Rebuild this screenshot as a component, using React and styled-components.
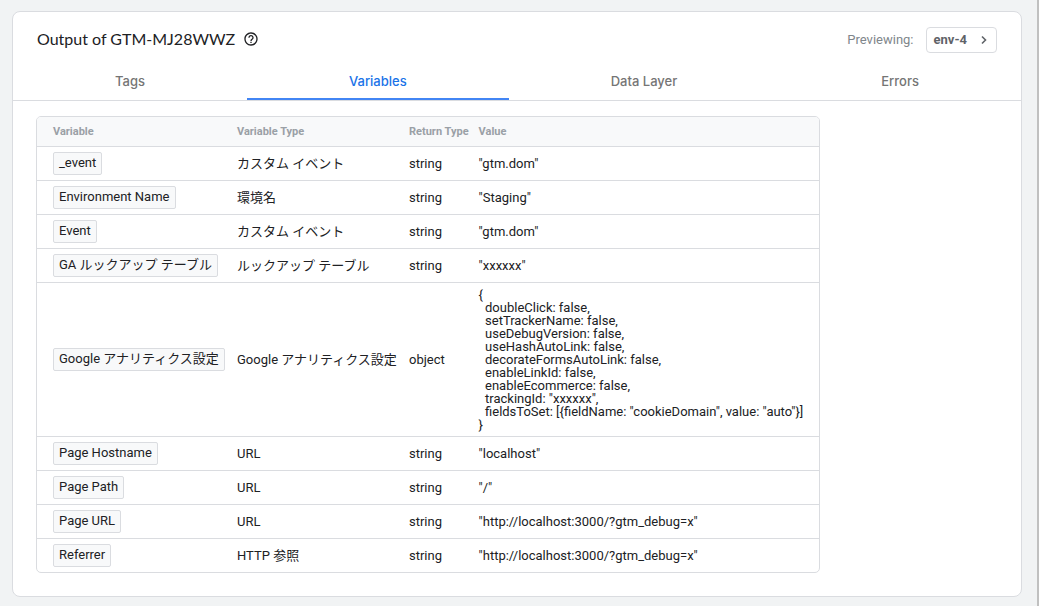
import React from 'react';
import styled, { createGlobalStyle } from 'styled-components';

const GlobalStyle = createGlobalStyle`
  *, *::before, *::after { box-sizing: border-box; }
  body {
    margin: 0;
    background: #f1f3f4;
    color: #202124;
    font: 13px/20px Roboto, "Noto Sans CJK JP", sans-serif;
  }
`;

const Page = styled.div`
  min-height: 100vh;
  padding: 11px 15px 9px 12px;
  border-right: 2px solid #c0c0c0;
`;

const Card = styled.main`
  background: #fff;
  border: 1px solid #dadce0;
  border-radius: 8px;
`;

const Header = styled.header`
  display: flex;
  justify-content: space-between;
  align-items: flex-start;
  padding: 14px 24px 8px;
`;

const Title = styled.h1`
  display: flex;
  align-items: center;
  gap: 8px;
  margin: 0;
  font: 400 16px/26px Lato, Roboto, sans-serif;
`;

const HelpButton = styled.button`
  display: flex;
  padding: 0;
  border: 0;
  background: none;
  color: #202124;
`;

const Environment = styled.div`
  display: flex;
  align-items: center;
  gap: 12px;
  padding-top: 1px;
  color: #80868b;
`;

const EnvironmentButton = styled.button`
  display: flex;
  align-items: center;
  gap: 10px;
  height: 26px;
  padding: 0 5px 0 7px;
  border: 1px solid #dadce0;
  border-radius: 4px;
  background: #fff;
  color: #5f6368;
  font: 700 13px/20px Roboto, sans-serif;
`;

const Tabs = styled.nav`
  display: flex;
  border-bottom: 1px solid #dadce0;
`;

const Tab = styled.button`
  flex: 1 1 auto;
  height: 39px;
  padding: 2px 0 0;
  border: 0;
  border-bottom: 2px solid ${(p) => (p.$active ? '#4285f4' : 'transparent')};
  background: none;
  color: ${(p) => (p.$active ? '#1a73e8' : '#757575')};
  font: 500 13px/20px Inter, sans-serif;
`;

const Content = styled.section`
  padding: 15px 23px 23px;
`;

const TableFrame = styled.div`
  width: fit-content;
  max-width: 100%;
  overflow: hidden;
  border: 1px solid #dadce0;
  border-radius: 5px;
`;

const Table = styled.table`
  border-collapse: separate;
  border-spacing: 0;
`;

const Column = styled.col`
  width: ${(p) => p.$width}px;
`;

const HeadCell = styled.th`
  height: 30px;
  padding: 0 5px;
  border-bottom: 1px solid #dadce0;
  background: #f8f9fa;
  color: #9aa0a6;
  font-size: 11px;
  font-weight: 700;
  text-align: left;
  white-space: nowrap;
  &:first-child { padding-left: 16px; }
  &:last-child { padding-right: 15px; }
`;

const Cell = styled.td`
  height: 34px;
  padding: 5px;
  border-bottom: 1px solid #dadce0;
  white-space: nowrap;
  &:first-child { padding-left: 16px; }
  &:last-child { padding-right: 15px; }
  tr:last-child > & { height: 33px; border-bottom: 0; }
`;

const Chip = styled.span`
  display: block;
  width: fit-content;
  height: 23px;
  padding: 0 5px;
  border: 1px solid #dadce0;
  border-radius: 2px;
  background: #f8f9fa;
`;

const Value = styled.pre`
  margin: 0;
  font: 13px/13px Roboto, sans-serif;
`;

const settings = `{
  doubleClick: false,
  setTrackerName: false,
  useDebugVersion: false,
  useHashAutoLink: false,
  decorateFormsAutoLink: false,
  enableLinkId: false,
  enableEcommerce: false,
  trackingId: "xxxxxx",
  fieldsToSet: [{fieldName: "cookieDomain", value: "auto"}]
}`;

const variables = [
  ['_event', 'カスタム イベント', 'string', '"gtm.dom"'],
  ['Environment Name', '環境名', 'string', '"Staging"'],
  ['Event', 'カスタム イベント', 'string', '"gtm.dom"'],
  ['GA ルックアップ テーブル', 'ルックアップ テーブル', 'string', '"xxxxxx"'],
  ['Google アナリティクス設定', 'Google アナリティクス設定', 'object', settings],
  ['Page Hostname', 'URL', 'string', '"localhost"'],
  ['Page Path', 'URL', 'string', '"/"'],
  ['Page URL', 'URL', 'string', '"http://localhost:3000/?gtm_debug=x"'],
  ['Referrer', 'HTTP 参照', 'string', '"http://localhost:3000/?gtm_debug=x"'],
];

const tabs = ['Tags', 'Variables', 'Data Layer', 'Errors'];

const HelpIcon = () => (
  <svg width="16" height="16" viewBox="0 0 24 24" fill="currentColor" aria-hidden="true">
    <path d="M11 18h2v-2h-2v2zm1-16C6.480 2 2 6.480 2 12s4.480 10 10 10 10-4.480 10-10S17.520 2 12 2zm0 18c-4.410 0-8-3.590-8-8s3.590-8 8-8 8 3.590 8 8-3.590 8-8 8zm0-14c-2.210 0-4 1.790-4 4h2c0-1.100.9-2 2-2s2 .9 2 2c0 2-3 1.750-3 5h2c0-2.250 3-2.500 3-5 0-2.210-1.790-4-4-4z" />
  </svg>
);

const ChevronIcon = () => (
  <svg width="14" height="14" viewBox="0 0 14 14" fill="none" stroke="currentColor" strokeWidth="1.6" aria-hidden="true">
    <path d="M5 3.500 8.500 7 5 10.500" />
  </svg>
);

export default function App() {
  const [active, setActive] = React.useState('Variables');
  return (
    <Page>
      <GlobalStyle />
      <Card>
        <Header>
          <Title>
            Output of GTM-MJ28WWZ
            <HelpButton aria-label="Help"><HelpIcon /></HelpButton>
          </Title>
          <Environment>
            <span>Previewing:</span>
            <EnvironmentButton>env-4 <ChevronIcon /></EnvironmentButton>
          </Environment>
        </Header>
        <Tabs>
          {tabs.map((tab) => (
            <Tab key={tab} $active={tab === active} onClick={() => setActive(tab)}>{tab}</Tab>
          ))}
        </Tabs>
        <Content>
          <TableFrame>
            <Table>
              <colgroup>
                <Column $width={195} />
                <Column $width={172} />
                <Column $width={69} />
                <Column $width={345} />
              </colgroup>
              <thead>
                <tr>
                  <HeadCell>Variable</HeadCell>
                  <HeadCell>Variable Type</HeadCell>
                  <HeadCell>Return Type</HeadCell>
                  <HeadCell>Value</HeadCell>
                </tr>
              </thead>
              <tbody>
                {variables.map(([name, type, returns, value]) => (
                  <tr key={name}>
                    <Cell><Chip>{name}</Chip></Cell>
                    <Cell>{type}</Cell>
                    <Cell>{returns}</Cell>
                    <Cell><Value>{value}</Value></Cell>
                  </tr>
                ))}
              </tbody>
            </Table>
          </TableFrame>
        </Content>
      </Card>
    </Page>
  );
}
